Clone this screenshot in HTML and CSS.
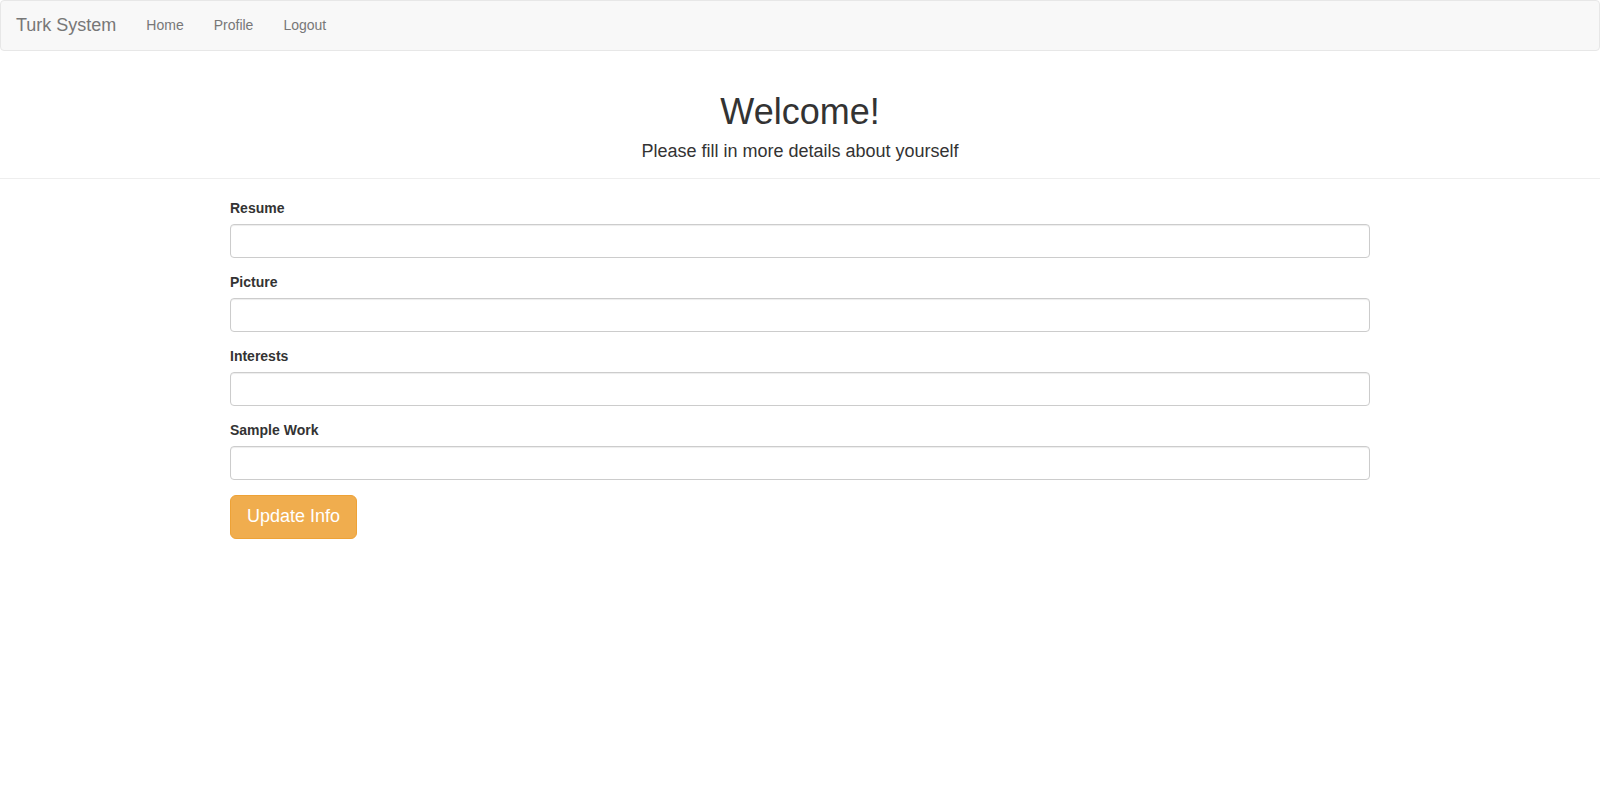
FILE: index.html
```html
<!DOCTYPE html>
<html>
<head>
<meta charset="utf-8">
<title>Turk System</title>
<link rel="stylesheet" href="styles.css">
</head>
<body>
<nav class="navbar">
  <div class="navbar-inner">
    <a class="brand" href="#">Turk System</a>
    <ul class="nav">
      <li><a href="#">Home</a></li>
      <li><a href="#">Profile</a></li>
      <li><a href="#">Logout</a></li>
    </ul>
  </div>
</nav>
<header class="intro">
  <h1 class="title">Welcome!</h1>
  <h4 class="subtitle">Please fill in more details about yourself</h4>
</header>
<hr class="rule">
<main class="container">
  <form class="form">
    <div class="form-group">
      <label class="label">Resume</label>
      <input class="input" type="text">
    </div>
    <div class="form-group">
      <label class="label">Picture</label>
      <input class="input" type="text">
    </div>
    <div class="form-group">
      <label class="label">Interests</label>
      <input class="input" type="text">
    </div>
    <div class="form-group">
      <label class="label">Sample Work</label>
      <input class="input" type="text">
    </div>
    <button class="btn" type="button">Update Info</button>
  </form>
</main>
</body>
</html>
```

FILE: styles.css
```css
* { box-sizing: border-box; }
html, body { margin: 0; padding: 0; }
body {
  font-family: "Liberation Sans", Arial, sans-serif;
  font-size: 14px;
  line-height: 1.42857;
  color: #333;
  background: #fff;
}
.navbar {
  background: #f8f8f8;
  border: 1px solid #e7e7e7;
  border-radius: 4px;
  margin-bottom: 0;
}
.navbar-inner {
  display: flex;
  align-items: center;
  padding: 0 15px;
}
.brand {
  font-size: 18px;
  line-height: 20px;
  padding: 14px 15px 15px 0;
  color: #777;
  text-decoration: none;
}
.nav {
  display: flex;
  list-style: none;
  margin: 0;
  padding: 0;
}
.nav a {
  display: block;
  padding: 14px 15px 15px;
  line-height: 20px;
  color: #777;
  text-decoration: none;
}
.intro {
  text-align: center;
}
.title {
  font-size: 36px;
  font-weight: 500;
  line-height: 1.1;
  margin: 41px 0 10px;
}
.subtitle {
  font-size: 18px;
  font-weight: 500;
  line-height: 1.1;
  margin: 7px 0 0;
}
.rule {
  border: 0;
  border-top: 1px solid #eee;
  margin: 17px 0 20px;
}
.container {
  width: 1170px;
  margin: 0 auto;
  padding: 0 15px;
}
.form-group { margin-bottom: 15px; }
.label {
  display: block;
  font-weight: bold;
  margin-bottom: 5px;
  max-width: 100%;
}
.input {
  display: block;
  width: 100%;
  height: 34px;
  padding: 6px 12px;
  font-size: 14px;
  line-height: 1.42857;
  color: #555;
  background: #fff;
  border: 1px solid #ccc;
  border-radius: 4px;
  box-shadow: inset 0 1px 1px rgba(0,0,0,.075);
  font-family: inherit;
}
.btn {
  display: inline-block;
  padding: 9px 16px;
  font-family: inherit;
  font-size: 18px;
  line-height: 1.3333;
  color: #fff;
  background: #f0ad4e;
  border: 1px solid #eea236;
  border-radius: 6px;
  cursor: pointer;
}
```
